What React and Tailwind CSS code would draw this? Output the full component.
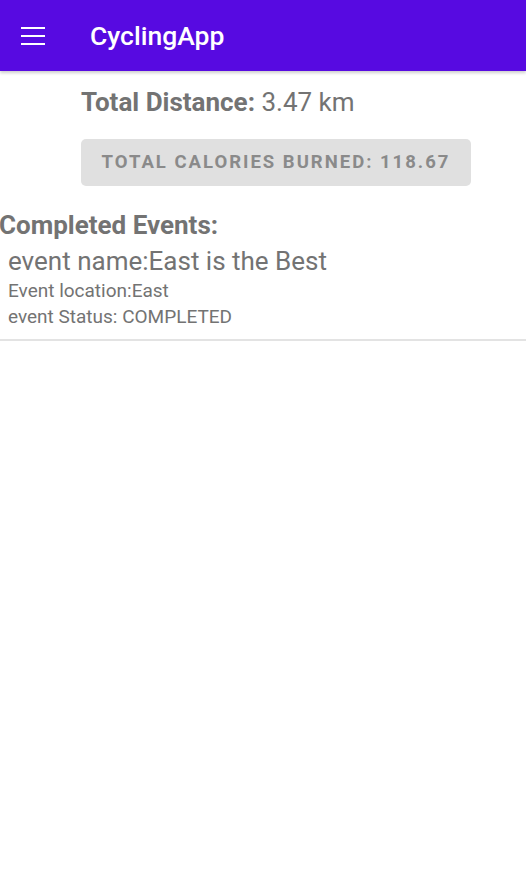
import React from 'react';

const App = () => {
    return (
        <div className="w-[526px] h-[888px] bg-white font-['Roboto',sans-serif] overflow-hidden">
            {/* Toolbar */}
            <div className="h-[71px] bg-[#570ae1] flex items-center shadow-[0_2px_3px_rgba(0,0,0,0.2)] relative z-10">
                <div className="w-[90px] pl-[21px] flex flex-col gap-[6px]">
                    <div className="w-[24px] h-[2px] bg-white" />
                    <div className="w-[24px] h-[2px] bg-white" />
                    <div className="w-[24px] h-[2px] bg-white" />
                </div>
                <span className="text-white text-[26.5px] font-medium">CyclingApp</span>
            </div>

            {/* Summary */}
            <div className="pl-[81px] pr-[55px] pt-[14px]">
                <p className="text-[26px] text-[#737373] leading-[34px]">
                    <span className="font-bold">Total Distance:</span> 3.47 km
                </p>
                <button className="mt-[20px] w-[390px] h-[47px] bg-[#e0e0e0] rounded-[5px] text-[#8a8a8a] text-[18.5px] font-bold tracking-[2px] flex items-center justify-center">
                    TOTAL CALORIES BURNED: 118.67
                </button>
            </div>

            {/* Completed events */}
            <div className="mt-[24px]">
                <h2 className="text-[26px] font-bold text-[#737373] leading-[30px] -ml-[1px]">Completed Events:</h2>
                <div className="pl-[8px] pb-[9px] border-b-2 border-[#e3e3e3]">
                    <p className="text-[26px] text-[#737373] leading-[36px] mt-[3px]">event name:East is the Best</p>
                    <p className="text-[19px] text-[#737373] leading-[26px] -mt-[1px]">Event location:East</p>
                    <p className="text-[19px] text-[#737373] leading-[26px]">event Status: COMPLETED</p>
                </div>
            </div>
        </div>
    );
};

export default App;
